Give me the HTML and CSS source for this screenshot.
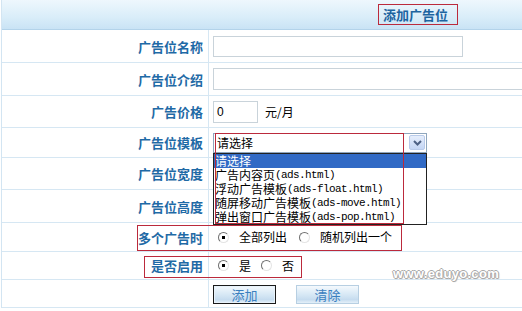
FILE: index.html
```html
<html>
<head>
    <link rel="stylesheet" href="styles.css">
</head>

<body>

<div class="page">
    <div class="head">
        <span class="title">添加广告位</span>
    </div>

    <div class="row h33">
        <div class="label">广告位名称</div>
        <div class="field"><input type="text" class="txt txt-name"></div>
    </div>

    <div class="row h33">
        <div class="label">广告位介绍</div>
        <div class="field"><input type="text" class="txt txt-intro"></div>
    </div>

    <div class="row h32">
        <div class="label">广告价格</div>
        <div class="field">
            <input type="text" class="txt txt-price" value="0">
            <span class="unit">元/月</span>
        </div>
    </div>

    <div class="row h30">
        <div class="label">广告位模板</div>
        <div class="field">
            <div class="select">
                <span class="select-text">请选择</span>
                <span class="select-arrow">
                    <svg width="9" height="6" viewBox="0 0 9 6"><path d="M1 1 L4.5 4.5 L8 1" fill="none" stroke="#4d6185" stroke-width="2"/></svg>
                </span>
                <ul class="options">
                    <li class="active">请选择</li>
                    <li><span class="cn">广告内容页</span><span class="en">(ads.html)</span></li>
                    <li><span class="cn">浮动广告模板</span><span class="en">(ads-float.html)</span></li>
                    <li><span class="cn">随屏移动广告模板</span><span class="en">(ads-move.html)</span></li>
                    <li><span class="cn">弹出窗口广告模板</span><span class="en">(ads-pop.html)</span></li>
                </ul>
            </div>
        </div>
    </div>

    <div class="row h32">
        <div class="label">广告位宽度</div>
        <div class="field"><input type="text" class="txt txt-price"></div>
    </div>

    <div class="row h33">
        <div class="label">广告位高度</div>
        <div class="field"><input type="text" class="txt txt-price"></div>
    </div>

    <div class="row h29">
        <div class="label">多个广告时</div>
        <div class="field">
            <span class="radio checked"></span><span class="opt">全部列出</span>
            <span class="radio"></span><span class="opt">随机列出一个</span>
        </div>
    </div>

    <div class="row h28">
        <div class="label">是否启用</div>
        <div class="field">
            <span class="radio checked"></span><span class="opt opt-short">是</span>
            <span class="radio"></span><span class="opt">否</span>
        </div>
    </div>

    <div class="row h28">
        <div class="label"></div>
        <div class="field">
            <button class="btn btn-focus">添加</button>
            <button class="btn">清除</button>
        </div>
    </div>

    <!-- red marks drawn over the screenshot -->
    <div class="mark mark-title"></div>
    <div class="mark mark-select"></div>
    <div class="mark mark-multi"></div>
    <div class="mark mark-enable"></div>

    <div class="watermark">www.eduyo.com</div>
</div>

</body>
</html>
```

FILE: styles.css
```css
body {
    margin: 0;
    padding: 0;
    background-color: #fff;
    font-family: "Noto Sans CJK SC", "Liberation Sans", sans-serif;
    font-size: 12px;
    color: #000;
    overflow: hidden;
}

.page {
    position: relative;
    width: 540px;
    border-left: 1px solid #d3e5f2;
    margin-left: 1px;
}

.head {
    height: 29px;
    border-bottom: 1px solid #b3d3ea;
    background: linear-gradient(#eef7fd, #d9edf9 60%, #c9e3f5);
    padding-left: 381px;
    line-height: 29px;
}

.title {
    font-size: 13px;
    font-weight: bold;
    color: #1d64a0;
}

.row {
    display: flex;
    box-sizing: border-box;
    border-bottom: 1px solid #d6e7f3;
}

.h33 { height: 33px; }
.h32 { height: 32px; }
.h30 { height: 30px; }
.h29 { height: 29px; }
.h28 { height: 28px; }

.label {
    flex-shrink: 0;
    box-sizing: border-box;
    width: 207px;
    border-right: 1px solid #d6e7f3;
    padding-right: 5px;
    display: flex;
    align-items: center;
    justify-content: flex-end;
    font-size: 13px;
    font-weight: bold;
    color: #1f6aa6;
}

.field {
    flex: 1;
    display: flex;
    align-items: center;
    padding-left: 4px;
}

.txt {
    box-sizing: border-box;
    height: 22px;
    border: 1px solid #c9d3da;
    padding: 0 3px;
    font-family: "Liberation Sans", sans-serif;
    font-size: 12px;
    outline: none;
}

.txt-name {
    width: 250px;
    height: 21px;
}

.txt-intro {
    width: 330px;
}

.txt-price {
    width: 45px;
}

.unit {
    margin-left: 7px;
    font-size: 12px;
    line-height: 14px;
}

.select {
    position: relative;
    box-sizing: border-box;
    width: 214px;
    height: 20px;
    border: 1px solid #8fa6bd;
    background: #fff;
    display: flex;
    align-items: center;
}

.select-text {
    flex: 1;
    padding-left: 3px;
    line-height: 14px;
}

.select-arrow {
    box-sizing: border-box;
    width: 16px;
    height: 15px;
    margin-right: 1px;
    border: 1px solid #b9cbea;
    border-radius: 2px;
    background: linear-gradient(#e6eefc, #c4d6f5);
    display: flex;
    align-items: center;
    justify-content: center;
}

.options {
    position: absolute;
    top: 19px;
    left: -1px;
    width: 214px;
    box-sizing: border-box;
    margin: 0;
    padding: 0;
    list-style: none;
    border: 1px solid #222;
    background: #fff;
    z-index: 2;
}

.options li {
    display: flex;
    align-items: center;
    height: 14px;
    line-height: 14px;
    white-space: nowrap;
    padding-left: 1px;
}

.options li.active {
    background-color: #316ac5;
    color: #fff;
}

.cn {
    line-height: 14px;
}

.en {
    font-family: "Liberation Mono", monospace;
    font-size: 11px;
    letter-spacing: -0.6px;
    line-height: 14px;
}

.radio {
    position: relative;
    display: inline-block;
    box-sizing: border-box;
    width: 11px;
    height: 11px;
    border-radius: 50%;
    border: 1px solid;
    border-color: #6f6f6f #e4e4e4 #e4e4e4 #6f6f6f;
    margin-left: 5px;
    margin-right: 10px;
}

.radio + .opt + .radio {
    margin-left: 12px;
}

.radio.checked::after {
    content: "";
    position: absolute;
    left: 3px;
    top: 3px;
    width: 3px;
    height: 3px;
    background: #000;
}

.opt {
    font-size: 12px;
    line-height: 14px;
}

.opt-short + .radio {
    margin-left: 10px !important;
}

.btn {
    box-sizing: border-box;
    width: 63px;
    height: 19px;
    margin-top: 2px;
    padding: 0;
    border: 1px solid #b7cfe2;
    background: linear-gradient(#f4f9fd, #d7e8f5 50%, #c6dcef 80%, #e4f0f9);
    font-family: "Noto Sans CJK SC", sans-serif;
    font-size: 13px;
    line-height: 17px;
    color: #3a7fbf;
    cursor: pointer;
}

.btn + .btn {
    margin-left: 20px;
}

.btn-focus {
    border: 1px solid #1a1a1a;
    box-shadow: inset 0 0 0 1px #e8f2fa;
}

.mark {
    position: absolute;
    border: 1px solid #bb2a3c;
    z-index: 3;
}

.mark-title {
    left: 376px;
    top: 4px;
    width: 78px;
    height: 19px;
}

.mark-select {
    left: 213px;
    top: 133px;
    width: 187px;
    height: 89px;
}

.mark-multi {
    left: 135px;
    top: 225px;
    width: 263px;
    height: 24px;
}

.mark-enable {
    left: 142px;
    top: 256px;
    width: 156px;
    height: 20px;
}

.watermark {
    position: absolute;
    left: 391px;
    top: 266px;
    font-family: "Liberation Sans", sans-serif;
    font-size: 13px;
    font-weight: bold;
    color: #fff;
    letter-spacing: 0.3px;
    text-shadow: 1px 0 0 #a9a9a9, -1px 0 0 #a9a9a9, 0 1px 0 #a9a9a9, 0 -1px 0 #a9a9a9, 1px 1px 1px #bbb;
}
```
